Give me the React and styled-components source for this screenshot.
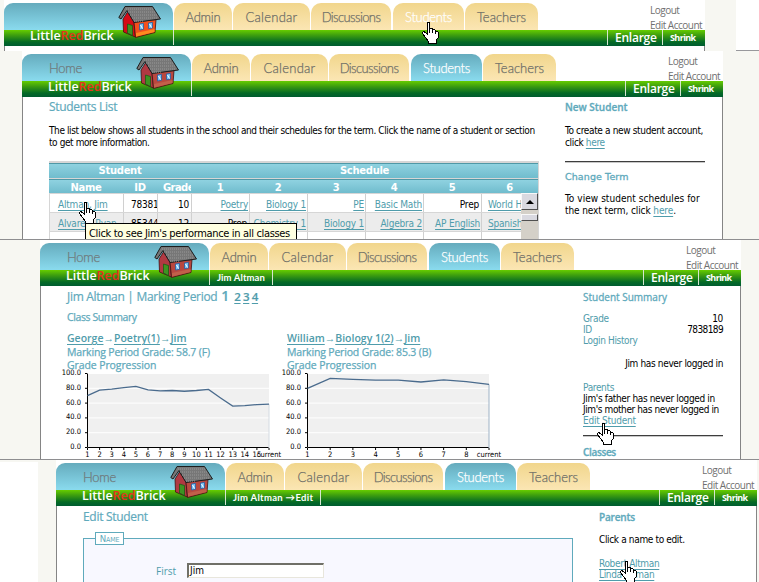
import React from "react";
import styled, { createGlobalStyle, css } from "styled-components";

const Global = createGlobalStyle`
  * { box-sizing: border-box; }
  body { margin: 0; background: #fff; overflow: hidden; }
`;

const TEAL = "#5faabc";
const LINK = "#4f9cab";
const BODY = `"DejaVu Sans Condensed", "DejaVu Sans", sans-serif`;
const HEAD = `"Open Sans", "Noto Sans", sans-serif`;
const GOTHIC = `Lato, sans-serif`;

const Canvas = styled.main`
  width: 759px;
  height: 582px;
  overflow: hidden;
  display: flex;
  flex-direction: column;
  background: #fff;
`;
const Screen = styled.section`
  position: relative;
  flex: none;
  height: ${(p) => p.$h}px;
  display: flex;
  background: #f7f7f2;
  overflow: hidden;
  ${(p) => p.$rule && css`border-bottom: 1px solid #8e8e90;`}
`;
const Margin = styled.div`
  flex: none;
  width: ${(p) => p.$w}px;
  background: ${(p) => (p.$blank ? "#fff" : "#f7f7f2")};
  border-bottom: ${(p) => (p.$line ? "1px solid #98989c" : "0")};
  margin-left: ${(p) => p.$gap || 0}px;
  margin-top: ${(p) => p.$top || 0}px;
`;
const Page = styled.div`
  flex: none;
  width: 701px;
  background: #fff;
  display: flex;
  flex-direction: column;
`;
const Header = styled.header`
  position: relative;
  flex: none;
  padding-top: 3px;
`;
const TabRow = styled.nav`
  display: flex;
  height: 27px;
`;
const Tab = styled.div`
  width: ${(p) => p.$w}px;
  margin-right: ${(p) => p.$gap ?? 1}px;
  height: 27px;
  padding-top: 1px;
  border-radius: 10px 10px 0 0;
  text-align: center;
  font: 300 13px/26px ${GOTHIC};
  letter-spacing: ${(p) => p.$ls || 0}px;
  color: ${(p) => (p.$active || p.$hover ? "#fff" : "#6f6f68")};
  -webkit-text-stroke: 0.25px currentColor;
  background: ${(p) =>
    p.$active ? "linear-gradient(#65abbd, #8adbee)" : "linear-gradient(#f1d68c, #fbe6b4)"};
`;
const HomeTab = styled(Tab)`
  text-align: left;
  padding-left: 27px;
  color: #6f7a7c;
  border-radius: 9px 10px 0 0;
`;
const Account = styled.div`
  margin-left: 112px;
  height: 27px;
  white-space: nowrap;
  font: 10px/15px ${HEAD};
  letter-spacing: -0.5px;
  color: #707070;
`;
const Bar = styled.div`
  position: relative;
  display: flex;
  height: 16px;
  background: linear-gradient(#66cc00 0%, #3a9a10 35%, #046a26 75%, #005c30 100%);
  font-family: ${HEAD};
  color: #fff;
  white-space: nowrap;
`;
const Brand = styled.div`
  width: 169px;
  padding-left: 26px;
  font: 600 12.5px/12px ${HEAD};
  letter-spacing: -0.05px;
`;
const Red = styled.span`color: #e5331b;`;
const Crumb = styled.div`
  height: 15px;
  width: ${(p) => p.$w}px;
  border-left: 1px solid #d5e6d0;
  border-right: ${(p) => (p.$w ? "1px solid #d5e6d0" : "0")};
  padding-left: 7px;
  font: 700 9.5px/16px ${GOTHIC};
  letter-spacing: ${(p) => (p.$w > 64 ? 0.3 : 0.1)}px;
`;
const Enlarge = styled.div`
  height: 15px;
  width: 55px;
  margin-left: auto;
  border-left: 1px solid #d5e6d0;
  padding-left: 7px;
  font: 600 12px/16px ${HEAD};
  letter-spacing: -0.25px;
`;
const Shrink = styled.div`
  height: 15px;
  width: 43px;
  border-left: 1px solid #d5e6d0;
  padding-left: 7px;
  font: 700 9px/15px ${HEAD};
  letter-spacing: -0.6px;
`;
const HouseSvg = styled.svg`
  position: absolute;
  left: 114px;
  top: 5px;
`;

function House({ lit }) {
  return (
    <HouseSvg width="44" height="34" viewBox="0 0 44 34">
      <path d="M5 14 L9.500 7 L16 17 L17.500 32 L5.500 27 Z" fill={lit ? "#d40a16" : "#b03942"} stroke="#401010" strokeWidth=".8" />
      <path d="M16 17 L38 14.500 L37 27.500 L17.500 32.500 Z" fill={lit ? "#f4501d" : "#b9483f"} stroke="#401010" strokeWidth=".8" />
      <path d="M18 28 L36.500 24 V27 L18 31.500 Z" fill={lit ? "#ff8a20" : "#c2604a"} />
      <path d="M9.500 19 L14.500 20.500 V30.500 L9.500 28 Z" fill="#3d9422" stroke="#1d5a14" strokeWidth=".8" />
      <path d="M21.500 19 L25.500 18.300 V24.300 L21.500 25 Z M30.500 18 L34.500 17.300 V23 L30.500 23.700 Z" fill="#77c3f2" stroke="#2b5aa0" strokeWidth=".8" />
      <path d="M22.500 20 L24.500 23.500 M31.500 19 L33.500 22.500" stroke="#fff" />
      <path d="M7 1.500 H34.500 L42.500 14 L16 17.500 L9 5.500 L3 14 L.8 12.500 Z" fill="#777" stroke="#1c1c1c" />
      <path d="M8 4 H35 M10 7 H37 M12 10 H39 M14 13 H40 M16 16 H26" stroke="#999" strokeDasharray="1 1" />
    </HouseSvg>
  );
}

const Pointer = styled.svg`
  position: absolute;
  left: ${(p) => p.$x}px;
  top: ${(p) => p.$y}px;
`;
function Hand({ x, y }) {
  return (
    <Pointer $x={x} $y={y} width="17" height="22" viewBox="0 0 17 22" shapeRendering="crispEdges">
      <path
        d="M5.500 1.500 L6 .5 H7 L7.500 1.500 V6.500 L10.500 7 V7.500 L13 8 V8.500 L15.500 9.500 L16.500 11 V15 L14.500 18 V21.500 H6.500 V19.500 L1.500 13 L.5 10.500 L2 9.500 L5.500 12.500 Z"
        fill="#fff"
        stroke="#000"
      />
      <path d="M7.500 6V11 M10.500 7V11 M13.500 8V12" stroke="#000" fill="none" />
    </Pointer>
  );
}

function SiteHeader({ active, hover, crumb, crumbWidth, hideHome }) {
  const tab = (name, w, ls, gap) => (
    <Tab $w={w} $ls={ls} $gap={gap} $active={active === name} $hover={hover === name}>{name}</Tab>
  );
  return (
    <Header>
      <TabRow>
        <HomeTab $w={169} $ls={-0.3} $active>{hideHome ? "" : "Home"}</HomeTab>
        {tab("Admin", 58, -0.2)}
        {tab("Calendar", 77, 0.25)}
        {tab("Discussions", 80, -0.6, 2)}
        {tab("Students", 71, -0.3)}
        {tab("Teachers", 73, 0, 0)}
        <Account>Logout<br />Edit Account</Account>
      </TabRow>
      <Bar>
        <Brand>Little<Red>Red</Red>Brick</Brand>
        <Crumb $w={crumbWidth}>{crumb}</Crumb>
        <Enlarge>Enlarge</Enlarge>
        <Shrink>Shrink</Shrink>
      </Bar>
      <House lit={hideHome} />
    </Header>
  );
}

const Body = styled.div`
  flex: 1;
  min-height: 0;
  display: flex;
  overflow: hidden;
  padding-left: 26px;
  border-left: 1px solid #858585;
  border-right: 1px solid #858585;
`;
const Main = styled.div`
  flex: none;
  width: 516px;
`;
const Side = styled.aside`
  flex: none;
  width: 140px;
`;
const Title = styled.h1`
  margin: 0;
  height: 20px;
  padding-top: ${(p) => p.$pt ?? 1}px;
  font: 12px/20px ${HEAD};
  letter-spacing: -0.3px;
  -webkit-text-stroke: 0.2px currentColor;
  color: ${TEAL};
  white-space: nowrap;
`;
const SideTitle = styled.h2`
  margin: 0;
  height: 20px;
  padding-top: ${(p) => p.$pt || 0}px;
  font: ${(p) => p.$weight || 500} 10px/20px ${(p) => (p.$wide ? `"DejaVu Sans", sans-serif` : HEAD)};
  font-size: ${(p) => (p.$wide ? 9.5 : 10)}px;
  letter-spacing: ${(p) => p.$ls || 0}px;
  -webkit-text-stroke: 0.3px currentColor;
  color: ${TEAL};
  white-space: nowrap;
`;
const Text = styled.p`
  margin: ${(p) => p.$mt || 0}px 0 0;
  font: 10px/${(p) => p.$lh || 12}px ${BODY};
  letter-spacing: ${(p) => p.$ls ?? -0.35}px;
  color: ${(p) => (p.$teal ? LINK : "#000")};
  text-align: ${(p) => (p.$right ? "right" : "left")};
  white-space: nowrap;
`;
const Link = styled.a`
  color: ${LINK};
  text-decoration: underline;
  text-underline-offset: 2px;
`;
const Rule = styled.hr`
  margin: ${(p) => p.$mt}px 0 ${(p) => p.$mb}px;
  width: 140px;
  height: 2px;
  border: 0;
  background: linear-gradient(#3d3d3d 50%, #c8c8c8 50%);
`;

/* ---- student list ---- */
const COLS = "74px 34px 34px 58px 58px 58px 58px 58px 57px";
const Table = styled.div`
  position: relative;
  width: 490px;
  height: 80px;
  margin-top: 12px;
  overflow: hidden;
  border-top: 2px solid #d6d6d6;
  border-right: 1px solid #d6d6d6;
  background: #d6d6d6;
  font: 10px/21px ${BODY};
`;
const HeadRow = styled.div`
  display: grid;
  grid-template-columns: ${(p) => (p.$group ? "142px 347px" : COLS)};
  height: ${(p) => (p.$group ? 15 : 14)}px;
  margin-bottom: 1px;
  border-top: 1px solid #4f98a6;
  background: linear-gradient(#8fd2e0, #70bccd);
  font: 700 10px/${(p) => (p.$group ? 14 : 15)}px "DejaVu Sans", sans-serif;
  color: #fff;
  text-align: center;
`;
const HeadCell = styled.div`
  overflow: hidden;
  white-space: nowrap;
  letter-spacing: ${(p) => (p.$clip ? -0.6 : -0.3)}px;
  padding-left: ${(p) => (p.$clip ? 6 : 0)}px;
  text-align: ${(p) => (p.$clip ? "left" : "center")};
`;
const Row = styled.div`
  display: grid;
  grid-template-columns: ${COLS};
  height: 18px;
  margin-top: 1px;
  padding-left: 1px;
  & > * { background: ${(p) => (p.$alt ? "#ececec" : "#fff")}; }
`;
const Cell = styled.div`
  overflow: hidden;
  white-space: nowrap;
  border-right: 1px solid #d0d0d0;
  letter-spacing: -0.2px;
  text-align: ${(p) => (p.$left ? "left" : "right")};
  padding: 0 ${(p) => (p.$left ? 0 : p.$pr ?? 1)}px 0 ${(p) => (p.$left ? p.$pl ?? 7 : 0)}px;
`;
const Scroll = styled.div`
  position: absolute;
  right: 0;
  top: 30px;
  width: 17px;
  height: 52px;
  background: #d4d0c8;
`;
const ScrollButton = styled.div`
  display: flex;
  align-items: center;
  justify-content: center;
  height: ${(p) => p.$h}px;
  margin-bottom: 4px;
  background: #d9d9e0;
  border: 1px solid #f8f8f8;
  border-right: 1px solid #505050;
  border-bottom: 1px solid #505050;
`;
const Arrow = styled.div`
  border: 4px solid transparent;
  border-top: 0;
  border-bottom-color: #000;
`;
const Tooltip = styled.div`
  position: absolute;
  left: 85px;
  top: 172px;
  width: 212px;
  height: 19px;
  padding-left: 3px;
  border: 1px solid #000;
  background: #ffffe1;
  font: 11px/20px ${BODY};
  letter-spacing: -0.33px;
  white-space: nowrap;
`;

const students = [
  ["Altman, Jim", "7838189", "10", "Poetry", "Biology 1", "PE", "Basic Math", "Prep", "World H"],
  ["Alvarez, Ryan", "8534478", "12", "Prep", "Chemistry 1", "Biology 1", "Algebra 2", "AP English", "Spanish"],
  ["", "", "", "", "", "", "", "", ""],
];

function StudentTable() {
  return (
    <Table>
      <HeadRow $group><HeadCell>Student</HeadCell><HeadCell>Schedule</HeadCell></HeadRow>
      <HeadRow>
        {["Name", "ID", "Grade", "1", "2", "3", "4", "5", "6"].map((h) => (
          <HeadCell key={h} $clip={h === "Grade"}>{h}</HeadCell>
        ))}
      </HeadRow>
      {students.map((s, r) => (
        <Row key={r} $alt={r === 1}>
          {s.map((v, i) => {
            const plain = i === 1 || i === 2 || v === "Prep";
            return (
              <Cell key={i} $left={i < 2 || i === 8} $pl={i === 0 ? 8 : i === 1 ? 7 : 6} $pr={i === 2 || v === "Prep" ? 2 : 1}>
                {plain ? v : <Link>{v}</Link>}
              </Cell>
            );
          })}
        </Row>
      ))}
      <Scroll>
        <ScrollButton $h={17}><Arrow /></ScrollButton>
        <ScrollButton $h={7} />
      </Scroll>
    </Table>
  );
}

/* ---- performance charts ---- */
const Period = styled.span`
  font-size: ${(p) => (p.$big ? 14 : 11.5)}px;
  font-weight: 600;
  margin-left: ${(p) => (p.$big ? 1 : 2.5)}px;
  color: ${(p) => (p.$big ? TEAL : LINK)};
  ${(p) => !p.$big && css`text-decoration: underline; text-underline-offset: 2px;`}
`;
const Summary = styled.div`
  font: 500 10.5px/13px ${HEAD};
  letter-spacing: ${(p) => p.$ls || 0}px;
  -webkit-text-stroke: 0.25px currentColor;
  color: ${TEAL};
  margin: ${(p) => p.$mt || 0}px 0 ${(p) => p.$mb || 0}px;
  white-space: nowrap;
`;
const Trail = styled.div`
  font: 600 10.5px/14px ${HEAD};
  color: ${LINK};
  margin-bottom: 1px;
  white-space: nowrap;
`;
const Charts = styled.div`display: flex;`;
const ChartBox = styled.div`
  width: 220px;
  height: 130px;
`;
const Plot = styled.svg`
  display: block;
  overflow: visible;
  margin-left: -7px;
  font: 7.500px "DejaVu Sans Condensed", sans-serif;
`;

function Chart({ values, drop }) {
  const n = values.length - 1;
  const x = (i) => 27.5 + (i * 181.5) / n;
  const y = (v) => 76.5 - v * 0.74;
  return (
    <Plot width="220" height="90" viewBox="0 0 220 90">
      <rect x="28" y="3" width="181" height="73" fill="#f0f0f0" />
      {[0, 20, 40, 60, 80, 100].map((t) => (
        <g key={t}>
          <path d={`M28 ${y(t)}H209`} stroke={t ? "#fff" : "#888"} />
          <path d={`M25 ${y(t)}H27`} stroke="#000" />
          <text x="21" y={y(t) + 1.5} textAnchor="end">{t}.0</text>
        </g>
      ))}
      <path d="M27.500 2.500V76.500H209" stroke="#000" fill="none" />
      <path d={`M209 ${y(values[n])}V77`} stroke={drop} />
      {values.map((v, i) => (
        <g key={i}>
          <path d={`M${x(i)} 77V79`} stroke="#000" />
          <text x={x(i)} y="85.500" textAnchor="middle">{i === n ? "current" : i + 1}</text>
        </g>
      ))}
      <polyline points={values.map((v, i) => `${x(i)},${y(v)}`).join(" ")} fill="none" stroke="#4a6b8d" strokeWidth="1.3" />
    </Plot>
  );
}

const Pair = styled.div`
  display: flex;
  justify-content: space-between;
`;

/* ---- edit form ---- */
const Fieldset = styled.div`
  width: 490px;
  height: 80px;
  margin-top: 12px;
  border: 1px solid ${TEAL};
  background: #f8f8ff;
`;
const Legend = styled.div`
  width: 29px;
  height: 13px;
  margin: -7px 0 0 11px;
  border: 1px solid ${TEAL};
  background: #fff;
  color: ${TEAL};
  text-align: center;
  font: small-caps 9.5px/11px ${BODY};
  letter-spacing: -0.2px;
`;
const Field = styled.label`
  display: flex;
  align-items: center;
  margin-top: 18px;
  padding-left: 72px;
  font: 10px/12px ${HEAD};
  color: ${LINK};
`;
const Input = styled.div`
  width: 137px;
  height: 15px;
  margin-left: 11px;
  padding-left: 1px;
  border: 1px solid #e8e6dc;
  border-top: 2px solid #707068;
  border-left: 2px solid #707068;
  background: #fff;
  color: #000;
  font: 10px/12px ${BODY};
`;

export default function App() {
  return (
    <Canvas>
      <Global />
      <Screen $h={51}>
        <Margin $w={4} />
        <Page>
          <SiteHeader hover="Students" hideHome />
          <Body />
        </Page>
        <Margin $gap={31} $w={23} $blank $line />
        <Hand x={422} y={22} />
      </Screen>

      <Screen $h={189} $rule>
        <Margin $w={22} />
        <Page>
          <SiteHeader active="Students" />
          <Body>
            <Main>
              <Title $pt={0}>Students List</Title>
              <Text $mt={8} $ls={-0.41}>
                The list below shows all students in the school and their schedules for the term. Click the name of a student or section<br />
                to get more information.
              </Text>
              <StudentTable />
            </Main>
            <Side>
              <SideTitle $weight={600}>New Student</SideTitle>
              <Text $mt={8}>To create a new student account,<br />click <Link>here</Link></Text>
              <Rule $mt={12} $mb={4} />
              <SideTitle $wide $ls={0.1}>Change Term</SideTitle>
              <Text $mt={6} $ls={0.05}>To view student schedules for</Text>
              <Text $ls={-0.1}>the next term, click <Link>here</Link>.</Text>
            </Side>
          </Body>
        </Page>
        <Tooltip>Click to see Jim's performance in all classes</Tooltip>
        <Hand x={79} y={151} />
      </Screen>

      <Screen $h={220} $rule>
        <Margin $w={40} />
        <Page>
          <SiteHeader active="Students" crumb="Jim Altman" crumbWidth={64} />
          <Body>
            <Main>
              <Title $pt={0}>
                Jim Altman | Marking Period <Period $big>1</Period>{" "}
                <Period $big={false}>2</Period><Period>3</Period><Period>4</Period>
              </Title>
              <Summary $mt={5} $mb={7} $ls={-0.4}>Class Summary</Summary>
              <Charts>
                <ChartBox>
                  <Trail><Link>George</Link>→<Link>Poetry(1)</Link>→<Link>Jim</Link></Trail>
                  <Summary $ls={-0.17}>Marking Period Grade: 58.7 (F)</Summary>
                  <Summary $ls={-0.1} $mb={-1}>Grade Progression</Summary>
                  <Chart values={[70, 77.5, 79, 81, 82.5, 78, 76.5, 77, 76, 77, 78.5, 67, 56, 56.5, 58, 58.7]} drop="#d4dbe2" />
                </ChartBox>
                <ChartBox>
                  <Trail><Link>William</Link>→<Link>Biology 1(2)</Link>→<Link>Jim</Link></Trail>
                  <Summary $ls={-0.17}>Marking Period Grade: 85.3 (B)</Summary>
                  <Summary $ls={-0.1} $mb={-1}>Grade Progression</Summary>
                  <Chart values={[80, 93.5, 92, 91, 91, 88.5, 91.5, 89, 85.3]} drop="#9fb3c6" />
                </ChartBox>
              </Charts>
            </Main>
            <Side>
              <SideTitle $pt={1}>Student Summary</SideTitle>
              <Pair><Text $teal $mt={7} $lh={11}>Grade</Text><Text $mt={7} $lh={11}>10</Text></Pair>
              <Pair><Text $teal $lh={11}>ID</Text><Text $lh={11} $ls={-0.6}>7838189</Text></Pair>
              <Text $teal $lh={11}>Login History</Text>
              <Text $mt={12} $lh={11} $right>Jim has never logged in</Text>
              <Text $teal $mt={13} $lh={11}>Parents</Text>
              <Text $lh={11}>Jim's father has never logged in</Text>
              <Text $lh={11} $ls={-0.4}>Jim's mother has never logged in</Text>
              <Text $lh={11} $ls={-0.25}><Link>Edit Student</Link></Text>
              <Rule $mt={9} $mb={5} />
              <SideTitle $weight={600} $ls={-0.35}>Classes</SideTitle>
            </Side>
          </Body>
        </Page>
        <Hand x={597} y={183} />
      </Screen>

      <Screen $h={122}>
        <Margin $w={38} $blank $top={2} />
        <Margin $w={18} />
        <Page>
          <SiteHeader active="Students" crumb="Jim Altman →Edit" crumbWidth={96} />
          <Body>
            <Main>
              <Title>Edit Student</Title>
              <Fieldset>
                <Legend>Name</Legend>
                <Field>First<Input>Jim</Input></Field>
              </Fieldset>
            </Main>
            <Side>
              <SideTitle $ls={-0.2} $weight={600} $pt={1}>Parents</SideTitle>
              <Text $mt={8}>Click a name to edit.</Text>
              <Text $mt={12} $lh={11}><Link>Robert Altman</Link></Text>
              <Text $lh={11}><Link>Linda Altman</Link></Text>
            </Side>
          </Body>
        </Page>
        <Hand x={620} y={101} />
      </Screen>
    </Canvas>
  );
}
